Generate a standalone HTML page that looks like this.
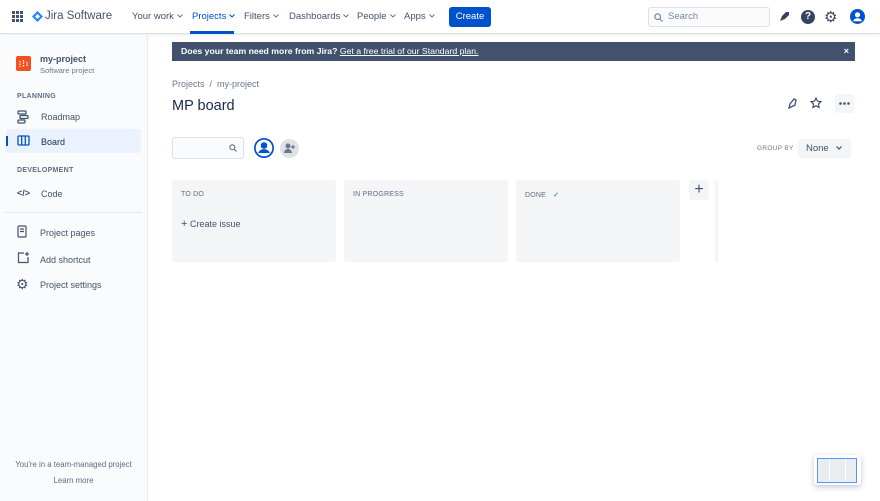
<!DOCTYPE html>
<html><head><meta charset="utf-8"><style>
*{box-sizing:border-box;margin:0;padding:0}
body{width:880px;height:501px;overflow:hidden;font-family:"Liberation Sans",sans-serif;color:#172B4D;background:#fff;position:relative;font-size:9px}
.abs{position:absolute}
.hdr{left:0;top:0;width:880px;height:34px;border-bottom:1px solid #DFE1E6;background:#fff;box-shadow:0 1px 2px rgba(9,30,66,.1)}
.nav{top:11px;font-size:9.5px;color:#42526E;white-space:nowrap}
.nav svg{margin-left:3px;vertical-align:1px}
.side{left:0;top:35px;width:148px;height:466px;background:#FAFBFC;border-right:1px solid #EBECF0}
.sec{font-size:7px;font-weight:bold;color:#5E6C84;letter-spacing:.3px}
.item{font-size:9px;color:#42526E}
.col{background:#F4F5F7;border-radius:3px;height:82px;top:180px;width:164px}
.col span{position:absolute;left:9px;top:11px;font-size:7px;color:#5E6C84;letter-spacing:.2px}
</style></head><body>
<div class="abs hdr">
 <svg class="abs" style="left:12px;top:11px" width="11" height="11" viewBox="0 0 11 11" fill="#42526E"><rect x="0" y="0" width="3" height="3"/><rect x="4" y="0" width="3" height="3"/><rect x="8" y="0" width="3" height="3"/><rect x="0" y="4" width="3" height="3"/><rect x="4" y="4" width="3" height="3"/><rect x="8" y="4" width="3" height="3"/><rect x="0" y="8" width="3" height="3"/><rect x="4" y="8" width="3" height="3"/><rect x="8" y="8" width="3" height="3"/></svg>
 <svg class="abs" style="left:32px;top:11px" width="11" height="11" viewBox="0 0 11 11"><path d="M5.5 0L11 5.5 5.5 11 0 5.5z" fill="#2684FF"/><path d="M5.5 3L8 5.5 5.5 8 3 5.5z" fill="#fff"/></svg>
 <div class="abs" style="left:45px;top:10px;font-size:11.5px;color:#42526E">Jira Software</div>
 <div class="abs nav" style="left:132px">Your work<svg width="6" height="4" viewBox="0 0 6 4" fill="none" stroke="#6B778C" stroke-width="1"><path d="M.5.5L3 3 5.5.5"/></svg></div>
 <div class="abs nav" style="left:192px;color:#0052CC">Projects<svg width="6" height="4" viewBox="0 0 6 4" fill="none" stroke="#0052CC" stroke-width="1"><path d="M.5.5L3 3 5.5.5"/></svg></div>
 <div class="abs" style="left:190px;top:31px;width:44px;height:3px;background:#0052CC"></div>
 <div class="abs nav" style="left:244px">Filters<svg width="6" height="4" viewBox="0 0 6 4" fill="none" stroke="#6B778C" stroke-width="1"><path d="M.5.5L3 3 5.5.5"/></svg></div>
 <div class="abs nav" style="left:289px">Dashboards<svg width="6" height="4" viewBox="0 0 6 4" fill="none" stroke="#6B778C" stroke-width="1"><path d="M.5.5L3 3 5.5.5"/></svg></div>
 <div class="abs nav" style="left:357px">People<svg width="6" height="4" viewBox="0 0 6 4" fill="none" stroke="#6B778C" stroke-width="1"><path d="M.5.5L3 3 5.5.5"/></svg></div>
 <div class="abs nav" style="left:404px">Apps<svg width="6" height="4" viewBox="0 0 6 4" fill="none" stroke="#6B778C" stroke-width="1"><path d="M.5.5L3 3 5.5.5"/></svg></div>
 <div class="abs" style="left:449px;top:7px;width:42px;height:20px;background:#0052CC;border-radius:3px;color:#fff;font-size:9.5px;text-align:center;line-height:20px">Create</div>
 <div class="abs" style="left:648px;top:7px;width:122px;height:20px;border:1px solid #DFE1E6;border-radius:3px;background:#FAFBFC;color:#7A869A;font-size:9.5px;line-height:18px;padding-left:19px">Search</div>
 <svg class="abs" style="left:654px;top:13px" width="9" height="9" viewBox="0 0 9 9" fill="none" stroke="#7A869A" stroke-width="1.2"><circle cx="3.7" cy="3.7" r="2.8"/><path d="M6 6l2.5 2.5"/></svg>
 <svg class="abs" style="left:778px;top:11px" width="12" height="12" viewBox="0 0 12 12" fill="#344563"><path d="M2 10l2-5 4-4 3 0 0 3-4 4z"/></svg>
 <div class="abs" style="left:801px;top:10px;width:14px;height:14px;border-radius:50%;background:#344563;color:#fff;font-size:10px;font-weight:bold;text-align:center;line-height:14px">?</div>
 <div class="abs" style="left:824px;top:8px;font-size:15px;color:#344563">⚙</div>
 <svg class="abs" style="left:850px;top:9px" width="15" height="15" viewBox="0 0 15 15"><circle cx="7.5" cy="7.5" r="7.5" fill="#0052CC"/><circle cx="7.5" cy="5.8" r="2.6" fill="#fff"/><path d="M3 12.2c1-2.3 2.6-3 4.5-3s3.5.7 4.5 3" fill="#fff"/></svg>
</div>
<div class="abs side">
 <svg class="abs" style="left:16px;top:21px" width="15" height="15" viewBox="0 0 15 15"><rect width="15" height="15" rx="2" fill="#F4511E"/><path d="M4 5v6M7.5 4v7M11 6v5" stroke="#fff" stroke-width="1.2" stroke-dasharray="1.5 1"/></svg>
 <div class="abs" style="left:40px;top:19px;font-size:9px;font-weight:bold;color:#42526E">my-project</div>
 <div class="abs" style="left:40px;top:31px;font-size:7.5px;color:#6B778C">Software project</div>
 <div class="abs sec" style="left:17px;top:58px">PLANNING</div>
 <svg class="abs" style="left:17px;top:75px" width="12" height="14" viewBox="0 0 12 14" fill="none" stroke="#42526E" stroke-width="1.3"><rect x="1" y="1" width="8" height="3" rx="1"/><rect x="3" y="5.5" width="8" height="3" rx="1"/><rect x="1" y="10" width="7" height="3" rx="1"/></svg>
 <div class="abs item" style="left:41px;top:77px">Roadmap</div>
 <div class="abs" style="left:6px;top:94px;width:135px;height:24px;background:#E9F2FE;border-radius:3px"></div>
 <div class="abs" style="left:6px;top:101px;width:2px;height:10px;background:#0052CC"></div>
 <svg class="abs" style="left:17px;top:100px" width="13" height="11" viewBox="0 0 13 11" fill="none" stroke="#0052CC" stroke-width="1.3"><rect x="1" y="1" width="11" height="9" rx="1"/><path d="M4.7 1v9M8.3 1v9"/></svg>
 <div class="abs item" style="left:41px;top:102px;color:#172B4D">Board</div>
 <div class="abs sec" style="left:17px;top:132px">DEVELOPMENT</div>
 <div class="abs" style="left:17px;top:153px;font-size:9px;color:#42526E;font-weight:bold">&lt;/&gt;</div>
 <div class="abs item" style="left:41px;top:154px">Code</div>
 <div class="abs" style="left:5px;top:177px;width:137px;height:1px;background:#E4E6EA"></div>
 <svg class="abs" style="left:17px;top:190px" width="10" height="13" viewBox="0 0 10 13" fill="none" stroke="#42526E" stroke-width="1.2"><rect x="1" y="1" width="8" height="11" rx="1"/><path d="M3 4h4M3 6.5h4"/></svg>
 <div class="abs item" style="left:40px;top:193px">Project pages</div>
 <svg class="abs" style="left:17px;top:217px" width="12" height="12" viewBox="0 0 12 12" fill="none" stroke="#42526E" stroke-width="1.2"><path d="M7 1H1.5v9.5H11V5"/><path d="M10 0v4M8 2h4"/></svg>
 <div class="abs item" style="left:40px;top:220px">Add shortcut</div>
 <div class="abs" style="left:16px;top:241px;font-size:14px;color:#42526E">⚙</div>
 <div class="abs item" style="left:40px;top:245px">Project settings</div>
 <div class="abs" style="left:0;top:425px;width:147px;text-align:center;font-size:7.8px;color:#5E6C84">You're in a team-managed project</div>
 <div class="abs" style="left:0;top:441px;width:147px;text-align:center;font-size:7.8px;color:#5E6C84">Learn more</div>
</div>
<div class="abs" style="left:172px;top:42px;width:683px;height:19px;background:#42526E;color:#fff;font-size:8.7px;font-weight:bold;line-height:19px;padding-left:9px">Does your team need more from Jira? <u style="font-weight:normal">Get a free trial of our Standard plan.</u><span style="position:absolute;right:6px;top:0;font-size:9px">×</span></div>
<div class="abs" style="left:172px;top:79px;font-size:9px;color:#6B778C">Projects &nbsp;/&nbsp; my-project</div>
<div class="abs" style="left:172px;top:98px;font-size:14.5px;color:#172B4D">MP board</div>
<svg class="abs" style="left:787px;top:97px" width="10" height="12" viewBox="0 0 10 12" fill="none" stroke="#42526E" stroke-width="1.3"><path d="M2 11l1-4 4-5 2 1-1 5-4 2z"/></svg>
<svg class="abs" style="left:810px;top:97px" width="12" height="12" viewBox="0 0 12 12" fill="none" stroke="#42526E" stroke-width="1.2"><path d="M6 1l1.5 3.2 3.5.4-2.6 2.4.7 3.5L6 8.8 2.9 10.5l.7-3.5L1 4.6l3.5-.4z"/></svg>
<div class="abs" style="left:835px;top:94px;width:19px;height:19px;background:#F4F5F7;border-radius:3px"></div>
<svg class="abs" style="left:839px;top:102px" width="11" height="3" viewBox="0 0 11 3" fill="#42526E"><circle cx="1.5" cy="1.5" r="1.3"/><circle cx="5.5" cy="1.5" r="1.3"/><circle cx="9.5" cy="1.5" r="1.3"/></svg>
<div class="abs" style="left:172px;top:137px;width:72px;height:22px;border:1px solid #DFE1E6;border-radius:3px;background:#FAFBFC"></div>
<svg class="abs" style="left:229px;top:144px" width="8" height="8" viewBox="0 0 9 9" fill="none" stroke="#5E6C84" stroke-width="1.2"><circle cx="3.7" cy="3.7" r="2.8"/><path d="M6 6l2.5 2.5"/></svg>
<svg class="abs" style="left:254px;top:138px" width="20" height="20" viewBox="0 0 20 20"><circle cx="10" cy="10" r="10" fill="#0052CC"/><circle cx="10" cy="10" r="8.3" fill="#fff"/><circle cx="10" cy="7.5" r="3.3" fill="#0052CC"/><path d="M4 15c1.5-3 3.5-3.8 6-3.8s4.5.8 6 3.8" fill="#0052CC"/></svg>
<svg class="abs" style="left:280px;top:139px" width="19" height="19" viewBox="0 0 19 19"><circle cx="9.5" cy="9.5" r="9.5" fill="#DFE1E6"/><circle cx="8" cy="7" r="2.5" fill="#6B778C"/><path d="M4 14c.5-3 2-4 4-4s3.5 1 4 4z" fill="#6B778C"/><path d="M13 6v4M11 8h4" stroke="#6B778C" stroke-width="1.2"/></svg>
<div class="abs" style="left:757px;top:145px;font-size:6.5px;color:#6B778C;letter-spacing:.3px">GROUP BY</div>
<div class="abs" style="left:798px;top:139px;width:53px;height:19px;background:#F4F5F7;border-radius:3px;font-size:9.5px;color:#42526E;line-height:19px;padding-left:8px">None <svg width="6" height="4" viewBox="0 0 6 4" fill="none" stroke="#42526E" stroke-width="1.2" style="margin-left:5px;vertical-align:1px"><path d="M.5.5L3 3 5.5.5"/></svg></div>
<div class="abs col" style="left:172px"><span>TO DO</span><div class="abs" style="left:9px;top:38px;font-size:9px;color:#42526E"><b style="font-weight:normal;font-size:11px">+</b> Create issue</div></div>
<div class="abs col" style="left:344px"><span>IN PROGRESS</span></div>
<div class="abs col" style="left:516px"><span>DONE <b style="color:#36B37E;margin-left:5px">✓</b></span></div>
<div class="abs" style="left:689px;top:180px;width:20px;height:20px;background:#F4F5F7;border-radius:3px;text-align:center;font-size:16px;line-height:19px;color:#42526E">+</div>
<div class="abs" style="left:713px;top:180px;width:5px;height:82px;background:linear-gradient(90deg,#fff,#F0F1F4)"></div>
<div class="abs" style="left:814px;top:455px;width:47px;height:30px;background:#fff;box-shadow:0 2px 6px rgba(9,30,66,.25);border-radius:3px"></div>
<div class="abs" style="left:817px;top:458px;width:40px;height:25px;border:1.5px solid #4C9AFF;background:#EBECF0"></div>
<div class="abs" style="left:829px;top:459px;width:1px;height:23px;background:#fff"></div>
<div class="abs" style="left:845px;top:459px;width:1px;height:23px;background:#fff"></div>
</body></html>
